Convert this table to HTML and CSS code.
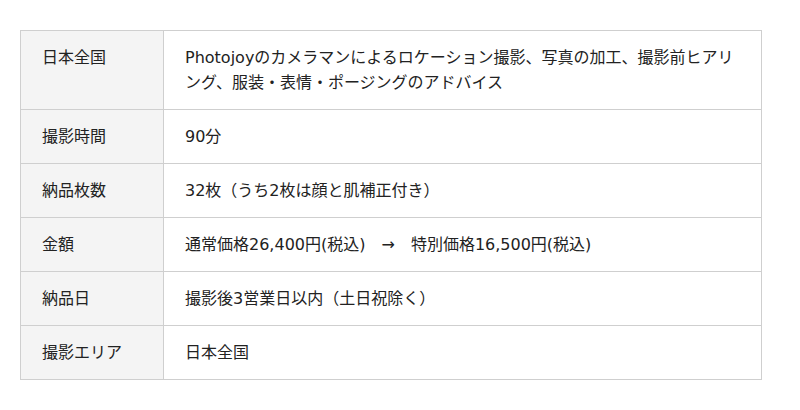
FILE: index.html
```html
<!DOCTYPE html>
<html lang="ja">
<head>
<meta charset="utf-8">
<link rel="stylesheet" href="styles.css">
</head>
<body>
<div class="wrap">
<table class="spec">
<tr><th>日本全国</th><td>Photojoyのカメラマンによるロケーション撮影、写真の加工、撮影前ヒアリング、服装・表情・ポージングのアドバイス</td></tr>
<tr><th>撮影時間</th><td>90分</td></tr>
<tr><th>納品枚数</th><td>32枚（うち2枚は顔と肌補正付き）</td></tr>
<tr><th>金額</th><td>通常価格26,400円(税込)　→　特別価格16,500円(税込)</td></tr>
<tr><th>納品日</th><td>撮影後3営業日以内（土日祝除く）</td></tr>
<tr><th>撮影エリア</th><td>日本全国</td></tr>
</table>
</div>
</body>
</html>
```
FILE: styles.css
```css
html, body { margin: 0; padding: 0; background: #fff; }
.wrap { padding: 30px 38px 0 20px; }
.spec {
  width: 742px;
  border-collapse: collapse;
  font-family: "DejaVu Sans", "Noto Sans CJK JP", sans-serif;
  font-size: 16px;
  line-height: 25px;
  color: #222;
}
.spec th, .spec td {
  border: 1px solid #cfcfcf;
  padding: 14px 20px 14px 21px;
  text-align: left;
  vertical-align: top;
  font-weight: normal;
}
.spec th { width: 101px; background: #f4f4f4; }
```
